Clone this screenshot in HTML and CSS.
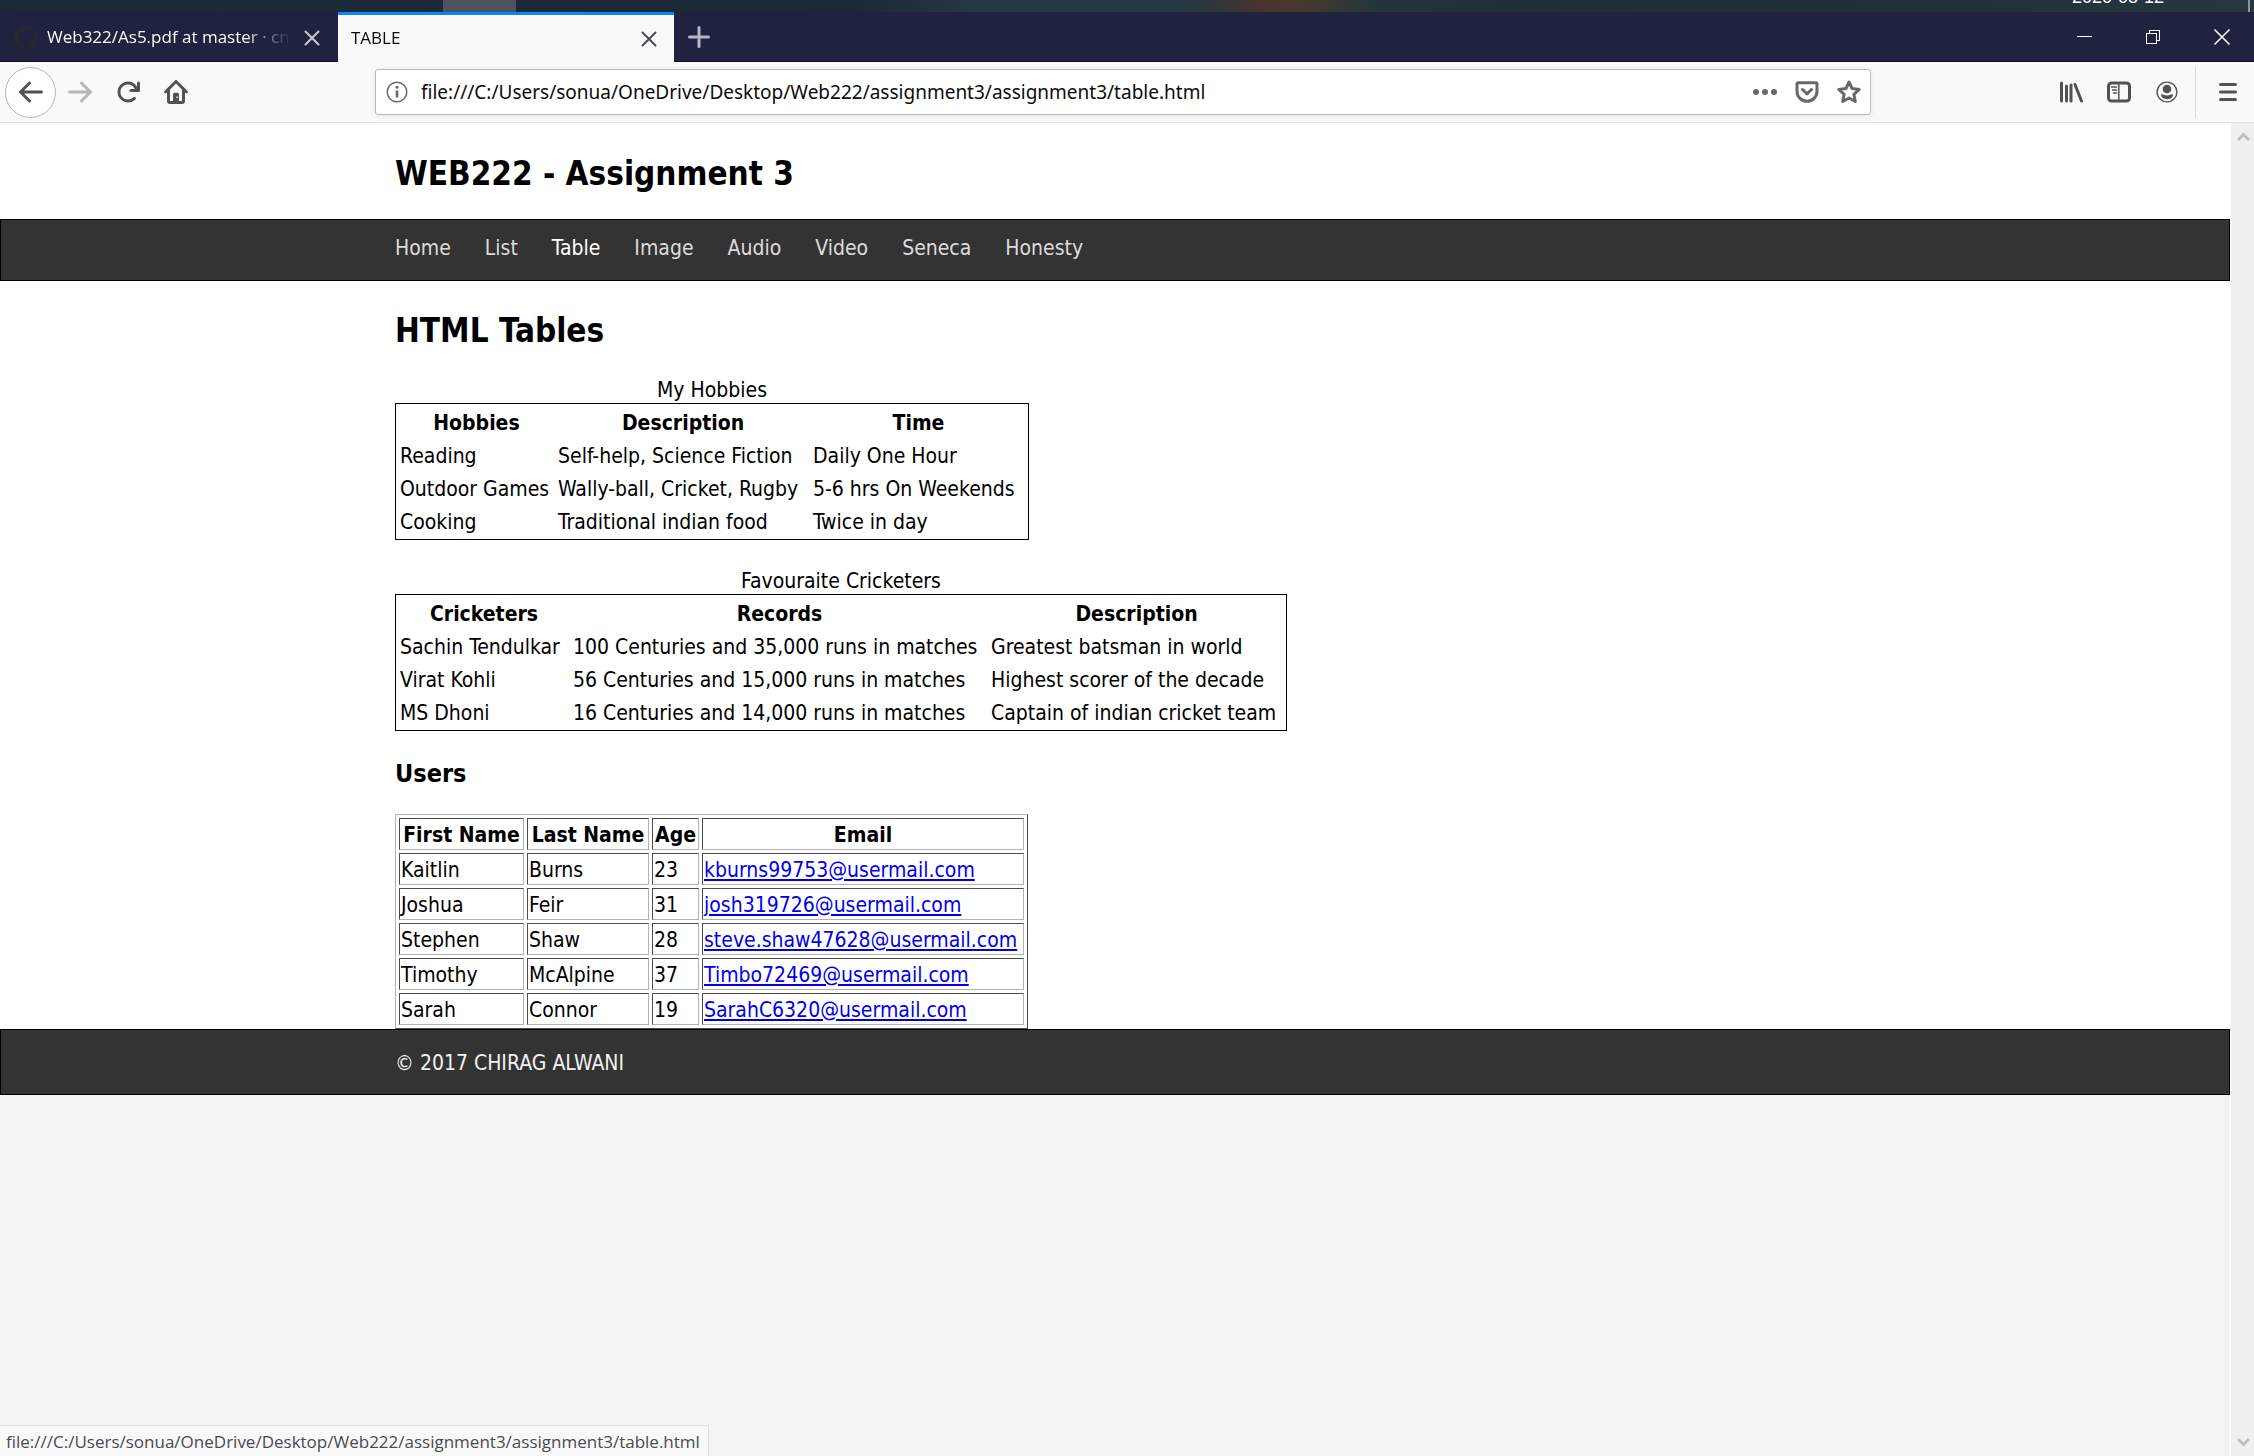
FILE: index.html
```html
<!DOCTYPE html>
<html lang="en">
<head>
<meta charset="utf-8">
<title>TABLE</title>
<link rel="stylesheet" href="styles.css">
</head>
<body>
<div class="desktop"><span class="desktop-tile"></span><time class="desktop-date" datetime="2020-08-12">2020-08-12</time><span class="desktop-edge"></span></div>

<div class="tabstrip">
  <div class="tab">
    <svg class="icon favicon" viewBox="0 0 16 16"><path d="M8 0C3.58 0 0 3.58 0 8c0 3.54 2.29 6.53 5.47 7.59.4.07.55-.17.55-.38 0-.19-.01-.82-.01-1.49-2.01.37-2.53-.49-2.69-.94-.09-.23-.48-.94-.82-1.13-.28-.15-.68-.52-.01-.53.63-.01 1.08.58 1.23.82.72 1.21 1.87.87 2.33.66.07-.52.28-.87.51-1.07-1.78-.2-3.64-.89-3.64-3.95 0-.87.31-1.59.82-2.15-.08-.2-.36-1.02.08-2.12 0 0 .67-.21 2.2.82.64-.18 1.32-.27 2-.27s1.36.09 2 .27c1.53-1.04 2.2-.82 2.2-.82.44 1.1.16 1.92.08 2.12.51.56.82 1.27.82 2.15 0 3.07-1.87 3.75-3.65 3.95.29.25.54.73.54 1.48 0 1.07-.01 1.93-.01 2.2 0 .21.15.46.55.38A8.01 8.01 0 0 0 16 8c0-4.42-3.58-8-8-8z"/></svg>
    <span class="tab-title">Web322/As5.pdf at master · cna</span>
    <button class="tab-close" aria-label="Close tab"><svg class="icon line" viewBox="0 0 24 24"><path d="M5.500 5.500l13 13M18.500 5.500l-13 13"/></svg></button>
  </div>
  <div class="tab tab-active">
    <span class="tab-title">TABLE</span>
    <button class="tab-close" aria-label="Close tab"><svg class="icon line" viewBox="0 0 24 24"><path d="M5.500 5.500l13 13M18.500 5.500l-13 13"/></svg></button>
  </div>
  <button class="new-tab" aria-label="New tab"><svg class="icon line plus" viewBox="0 0 24 24"><path d="M12 2.500v19M2.500 12h19"/></svg></button>
  <div class="window-controls">
    <button class="window-button" aria-label="Minimize"><svg class="icon thin" viewBox="0 0 24 24"><path d="M5 11.500h15"/></svg></button>
    <button class="window-button" aria-label="Restore"><svg class="icon thin" viewBox="0 0 24 24"><path d="M5.500 8.500h10v10h-10zM8.500 8.500v-3h10v10h-3"/></svg></button>
    <button class="window-button" aria-label="Close"><svg class="icon thin smooth" viewBox="0 0 24 24"><path d="M4.500 4.500l15 15M19.500 4.500l-15 15"/></svg></button>
  </div>
</div>

<div class="toolbar">
  <button class="tool tool-back" aria-label="Back"><svg class="icon" viewBox="0 0 16 16"><path d="M15 7H3.414l4.293-4.293a1 1 0 0 0-1.414-1.414l-6 6a1 1 0 0 0 0 1.414l6 6a1 1 0 0 0 1.414-1.414L3.414 9H15a1 1 0 0 0 0-2z"/></svg></button>
  <button class="tool tool-forward" aria-label="Forward" disabled><svg class="icon" viewBox="0 0 16 16"><path d="M1 7h11.586L8.293 2.707a1 1 0 0 1 1.414-1.414l6 6a1 1 0 0 1 0 1.414l-6 6a1 1 0 0 1-1.414-1.414L12.586 9H1a1 1 0 0 1 0-2z"/></svg></button>
  <button class="tool" aria-label="Reload"><svg class="icon" viewBox="0 0 16 16"><path d="M15 1a1 1 0 0 0-1 1v2.418A6.995 6.995 0 1 0 8 15a6.954 6.954 0 0 0 4.950-2.050 1 1 0 0 0-1.414-1.414A5.019 5.019 0 1 1 12.549 6H10a1 1 0 0 0 0 2h5a1 1 0 0 0 1-1V2a1 1 0 0 0-1-1z"/></svg></button>
  <button class="tool" aria-label="Home"><svg class="icon" viewBox="0 0 16 16"><path fill-rule="evenodd" d="M15.700 7.300l-7-7a1 1 0 0 0-1.400 0l-7 7a1 1 0 0 0 1.400 1.400L2 8.400V14a2 2 0 0 0 2 2h8a2 2 0 0 0 2-2V8.400l.3.3a1 1 0 0 0 1.400-1.400zM12 14h-2V9.500a1 1 0 0 0-1-1H7a1 1 0 0 0-1 1V14H4V6.400l4-4 4 4zM8.300 11h.9v1h-.9z"/></svg></button>

  <div class="urlbar">
    <svg class="icon" viewBox="0 0 24 24"><circle cx="12" cy="12" r="9.800" fill="none" stroke="currentColor" stroke-width="1.500"/><circle cx="12" cy="7.300" r="1.500"/><path d="M10.700 10.500h2.600v7h-2.600z"/></svg>
    <input class="urlbar-input" type="text" aria-label="Address" value="file:///C:/Users/sonua/OneDrive/Desktop/Web222/assignment3/assignment3/table.html">
    <button class="urlbar-button" aria-label="Page actions"><svg class="icon" viewBox="0 0 24 24"><circle cx="3" cy="12" r="3"/><circle cx="12" cy="12" r="3"/><circle cx="21" cy="12" r="3"/></svg></button>
    <button class="urlbar-button" aria-label="Save to Pocket"><svg class="icon heavy" viewBox="0 0 24 24"><path d="M3 2.800h18a1 1 0 0 1 1 1v7.500a10 10 0 0 1-20 0V3.800a1 1 0 0 1 1-1z"/><path d="M7.500 9.500l4.500 4.300 4.500-4.300"/></svg></button>
    <button class="urlbar-button" aria-label="Bookmark"><svg class="icon heavy" viewBox="0 0 24 24"><path d="M12 2l3 6.500 7.200.9-5.300 4.900 1.400 7.200L12 18l-6.300 3.500 1.400-7.200-5.300-4.900 7.200-.9z"/></svg></button>
  </div>

  <button class="tool" aria-label="Library"><svg class="icon heavy" viewBox="0 0 24 24"><path d="M2.500 3v18M7.500 6v15M12 5v16M16 4.500l6.500 16.500"/></svg></button>
  <button class="tool" aria-label="Sidebar"><svg class="icon heavy" viewBox="0 0 24 24"><rect x="1.500" y="3" width="21" height="18" rx="3"/><path stroke-width="1.500" d="M11.800 3v18M4.500 7h5M5.500 10h4M6.500 13h3"/></svg></button>
  <button class="tool" aria-label="Account"><svg class="icon" viewBox="0 0 24 24"><circle cx="12" cy="12" r="9.900" fill="none" stroke="currentColor" stroke-width="1.400"/><circle cx="12" cy="9" r="4.300"/><path d="M6 14.500c1.500-.7 2.500.9 6 .9s4.500-1.600 6-.9c0 3-2.700 4.700-6 4.700s-6-1.700-6-4.700z"/></svg></button>
  <span class="divider"></span>
  <button class="tool" aria-label="Menu"><svg class="icon heavy" viewBox="0 0 24 24"><path d="M4.500 4.500h15M4.500 12h15M4.500 19.500h15"/></svg></button>
</div>

<div class="viewport">
  <div class="page">
    <header class="page-header"><h1 class="heading">WEB222 - Assignment 3</h1></header>
    <nav class="page-nav">
      <a class="nav-link" href="#home">Home</a>
      <a class="nav-link" href="#list">List</a>
      <a class="nav-link nav-current" href="#table">Table</a>
      <a class="nav-link" href="#image">Image</a>
      <a class="nav-link" href="#audio">Audio</a>
      <a class="nav-link" href="#video">Video</a>
      <a class="nav-link" href="#seneca">Seneca</a>
      <a class="nav-link" href="#honesty">Honesty</a>
    </nav>
    <main class="page-main">
      <h2 class="heading">HTML Tables</h2>
      <table class="table plain">
        <caption>My Hobbies</caption>
        <colgroup><col class="w-hobby"><col class="w-about"><col class="w-time"></colgroup>
        <tr><th>Hobbies</th><th>Description</th><th>Time</th></tr>
        <tr><td>Reading</td><td>Self-help, Science Fiction</td><td>Daily One Hour</td></tr>
        <tr><td>Outdoor Games</td><td>Wally-ball, Cricket, Rugby</td><td>5-6 hrs On Weekends</td></tr>
        <tr><td>Cooking</td><td>Traditional indian food</td><td>Twice in day</td></tr>
      </table>
      <table class="table plain">
        <caption>Favouraite Cricketers</caption>
        <colgroup><col class="w-player"><col class="w-records"><col class="w-praise"></colgroup>
        <tr><th>Cricketers</th><th>Records</th><th>Description</th></tr>
        <tr><td>Sachin Tendulkar</td><td>100 Centuries and 35,000 runs in matches</td><td>Greatest batsman in world</td></tr>
        <tr><td>Virat Kohli</td><td>56 Centuries and 15,000 runs in matches</td><td>Highest scorer of the decade</td></tr>
        <tr><td>MS Dhoni</td><td>16 Centuries and 14,000 runs in matches</td><td>Captain of indian cricket team</td></tr>
      </table>
      <h3 class="subheading">Users</h3>
      <table class="table ruled">
        <colgroup><col class="w-first"><col class="w-last"><col class="w-age"><col class="w-email"></colgroup>
        <tr><th>First Name</th><th>Last Name</th><th>Age</th><th>Email</th></tr>
        <tr><td>Kaitlin</td><td>Burns</td><td>23</td><td><a href="mailto:kburns99753@usermail.com">kburns99753@usermail.com</a></td></tr>
        <tr><td>Joshua</td><td>Feir</td><td>31</td><td><a href="mailto:josh319726@usermail.com">josh319726@usermail.com</a></td></tr>
        <tr><td>Stephen</td><td>Shaw</td><td>28</td><td><a href="mailto:steve.shaw47628@usermail.com">steve.shaw47628@usermail.com</a></td></tr>
        <tr><td>Timothy</td><td>McAlpine</td><td>37</td><td><a href="mailto:Timbo72469@usermail.com">Timbo72469@usermail.com</a></td></tr>
        <tr><td>Sarah</td><td>Connor</td><td>19</td><td><a href="mailto:SarahC6320@usermail.com">SarahC6320@usermail.com</a></td></tr>
      </table>
    </main>
    <footer class="page-footer">© 2017 CHIRAG ALWANI</footer>
  </div>
  <div class="scrollbar">
    <svg class="icon arrow" viewBox="0 0 24 24"><path d="M7 15l5.500-5.500L18 15"/></svg>
    <svg class="icon arrow" viewBox="0 0 24 24"><path d="M7 9l5.500 5.500L18 9"/></svg>
  </div>
</div>
<div class="status">file:///C:/Users/sonua/OneDrive/Desktop/Web222/assignment3/assignment3/table.html</div>
</body>
</html>
```
FILE: styles.css
```css
* { box-sizing: border-box; }

body {
  margin: 0;
  min-height: 100vh;
  display: flex;
  flex-direction: column;
  background: #f3f3f3;
  color: #000;
  font-family: "Open Sans", "Noto Sans", sans-serif;
  font-size: 17px;
  line-height: 24px;
}

button {
  margin: 0;
  padding: 0;
  border: 0;
  background: none;
  color: inherit;
  display: flex;
  align-items: center;
  justify-content: center;
}

.icon { width: 24px; height: 24px; flex: none; fill: currentColor; display: block; }
.line, .thin, .heavy, .arrow { fill: none; stroke: currentColor; }
.line { stroke-width: 2; stroke-linecap: round; }
.plus { stroke-width: 3; }
.thin { stroke-width: 1; shape-rendering: crispEdges; }
.smooth { shape-rendering: auto; stroke-width: 1.5; }
.heavy { stroke-width: 3; stroke-linecap: round; stroke-linejoin: round; }
.arrow { stroke-width: 3; }

/* Strip of desktop above the window */
.desktop {
  height: 12px;
  overflow: hidden;
  display: flex;
  align-items: flex-start;
  padding: 0 4px 0 443px;
  background: linear-gradient(90deg, #1c2935 0%, #1b2838 38%, #263841 43%, #263841 53%, #4a312e 56%, #48372e 57%, #43392d 58%, #24353c 61%, #1f2e35 70%, #22323a 88%, #263740 100%);
}
.desktop-tile { width: 73px; height: 12px; background: #4c525f; }
.desktop-date { margin: -13px 84px 0 auto; color: #fff; font: 18px/20px "Liberation Sans", sans-serif; }
.desktop-edge { width: 2px; height: 12px; background: #8b949a; }

/* Tabs */
.tabstrip {
  display: flex;
  height: 50px;
  background: #202340;
  border-bottom: 1px solid #0f1028;
}
.tab {
  width: 338px;
  display: flex;
  align-items: center;
  gap: 9px;
  padding: 0 14px;
  border-top: 3px solid transparent;
  color: #f9f9fa;
}
.tab-active {
  width: 336px;
  margin-bottom: -1px;
  padding: 0 13px;
  border-top-color: #0a84ff;
  background: #f9f9fa;
  color: #0c0c0d;
}
.favicon { color: #24292e; }
.tab-title {
  flex: 1;
  min-width: 0;
  padding-bottom: 2px;
  overflow: hidden;
  white-space: nowrap;
  -webkit-mask-image: linear-gradient(90deg, #000 calc(100% - 48px), transparent);
  mask-image: linear-gradient(90deg, #000 calc(100% - 48px), transparent);
}
.tab-close { color: #c8c8cf; }
.tab-active .tab-close { color: #4a4a4f; }
.new-tab { width: 50px; color: #b8b8c2; }
.window-controls { margin-left: auto; display: flex; gap: 5px; color: #fff; }
.window-button { width: 64px; }

/* Navigation toolbar */
.toolbar {
  display: flex;
  align-items: center;
  height: 61px;
  padding: 0 2px 0 5px;
  background: #f9f9fa;
  border-bottom: 1px solid #e0e0e1;
  color: #525253;
}
.tool { width: 48px; height: 48px; }
.tool-back { width: 51px; height: 51px; border: 1px solid #b5b5b6; border-radius: 50%; background: #fff; }
.tool-forward { color: #b8b8b9; }
.urlbar {
  flex: 1;
  min-width: 0;
  margin: 0 176px 0 175px;
  height: 46px;
  padding-left: 9px;
  display: flex;
  align-items: center;
  border: 1px solid #b8b8b9;
  border-radius: 3px;
  background: #fff;
  box-shadow: 0 1px 6px rgba(0, 0, 0, 0.08);
  color: #68686b;
}
.urlbar-input {
  flex: 1;
  min-width: 0;
  padding: 0 12px;
  border: 0;
  outline: 0;
  background: transparent;
  color: #0c0c0d;
  font: 19px/28px "Noto Sans", "Open Sans", sans-serif;
}
.urlbar-button { width: 42px; height: 42px; }
.divider { width: 1px; height: 51px; margin: 0 8px 0 4px; background: #d9d9da; }

/* Document area */
.viewport { flex: 1; display: flex; }
.page {
  flex: 1;
  min-width: 0;
  font-family: "DejaVu Sans Condensed", "DejaVu Sans", Tahoma, sans-serif;
  font-size: 21px;
  line-height: 28px;
}
.page-header, .page-main { background: #fff; padding-left: 395px; }
.page-header { padding-top: 31px; padding-bottom: 25px; }
.heading { margin: 0; font-size: 33px; line-height: 40px; }
.page-nav {
  display: flex;
  gap: 34px;
  padding: 14px 0 18px 394px;
  border: 1px solid #000;
  background: #333;
}
.nav-link { color: #dcdcdc; text-decoration: none; }
.nav-current { color: #fff; }
.page-main { padding-top: 30px; }
.table {
  table-layout: fixed;
  width: 0;
  border-spacing: 3px;
  margin-top: 24px;
  white-space: nowrap;
}
.table caption { padding-top: 2px; line-height: 26px; }
.table + .table { margin-top: 26px; }
.table th, .table td { padding: 2px 1px 0; text-align: left; }
.table th { text-align: center; }
.plain { border: 1px solid #000; }
.ruled { border: 1px solid; border-color: #b2b2b2 #4c4c4c #4c4c4c #b2b2b2; }
.ruled th, .ruled td { border: 1px solid; border-color: #4c4c4c #b2b2b2 #b2b2b2 #4c4c4c; }
.table a { color: #00e; }
.subheading { margin: 27px 0 0; font-size: 25px; line-height: 32px; }
.w-hobby { width: 155px; }
.w-about { width: 252px; }
.w-time { width: 213px; }
.w-player { width: 170px; }
.w-records { width: 415px; }
.w-praise { width: 293px; }
.w-first { width: 125px; }
.w-last { width: 122px; }
.w-age { width: 47px; }
.w-email { width: 322px; }
.page-footer {
  padding: 19px 0 17px 394px;
  border: 1px solid #000;
  background: #333;
  color: #f2f2f2;
}
.scrollbar {
  width: 24px;
  padding: 2px 0;
  display: flex;
  flex-direction: column;
  justify-content: space-between;
  border-left: 1px solid #fff;
  background: #f0f0f0;
  color: #bfbfbf;
}

/* Link target shown over the page */
.status {
  position: fixed;
  left: 0;
  bottom: 0;
  padding: 4px 8px 2px 6px;
  border: 1px solid #dfdfe0;
  border-width: 1px 1px 0 0;
  background: #f9f9fa;
  color: #4a4a4f;
}
```
